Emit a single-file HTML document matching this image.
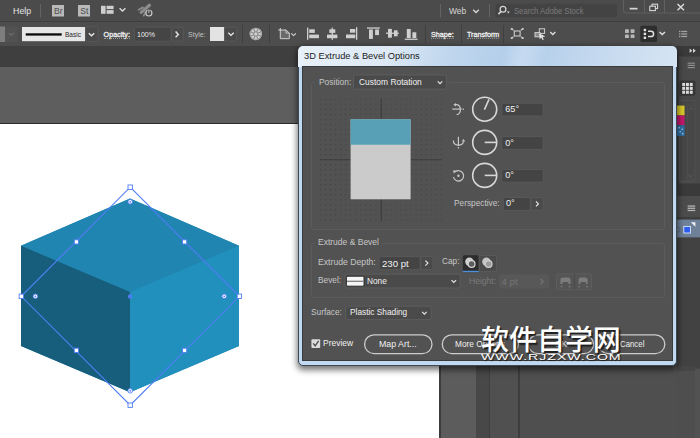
<!DOCTYPE html>
<html lang="en">
<head>
<meta charset="utf-8">
<title>3D Extrude &amp; Bevel Options</title>
<style>
html,body{margin:0;padding:0;}
body{width:700px;height:438px;overflow:hidden;position:relative;background:#5e5e5e;
  font-family:"Liberation Sans","Noto Sans CJK SC",sans-serif;color:#dcdcdc;}
.a{position:absolute;}
.t{position:absolute;white-space:nowrap;line-height:1;transform-origin:0 0;}
#menubar{left:0;top:0;width:700px;height:21px;background:#4b4b4b;}
#ctrlbar{left:0;top:21px;width:700px;height:25px;background:#4d4d4d;border-top:1px solid #3e3e3e;box-sizing:border-box;}
#tabstrip{left:0;top:46px;width:700px;height:21.3px;background:#3f3f3f;}
#paste{left:0;top:67px;width:700px;height:371px;background:#5e5e5e;}
#canvas{left:0;top:123px;width:439px;height:315px;background:#fff;border-top:1.2px solid #2c2c2c;box-sizing:border-box;}
#rpanel{left:677px;top:46px;width:23px;height:392px;background:#4a4a4a;}
/* dialog */
#dlg{left:297.6px;top:45.6px;width:379.6px;height:320.6px;box-sizing:border-box;border-radius:6px 6px 5px 5px;
  background:#c0d8f0;border:1px solid #3d4852;box-shadow:0 2.5px 6px 1px rgba(0,0,0,.55);}
#dlgtitle{left:-0.6px;top:-0.6px;width:379px;height:20.8px;border-radius:5px 5px 0 0;
  background:linear-gradient(105deg,#e8f0f9 0%,#dde9f5 24%,#bfd6ed 40%,#b5cfea 54%,#c6dbf0 59%,#b8d1eb 65%,#c9dcf0 84%,#d6e4f3 100%);}
#dlgbody{left:3.8px;top:19.6px;width:370.4px;height:294.5px;background:#525252;border:1px solid #3b3b3b;box-sizing:border-box;}
.u{border-bottom:1px dotted #9a9a9a;padding-bottom:0.2px;}
.grp{position:absolute;border:1px solid #5f5f5f;box-sizing:border-box;border-radius:2px;}
.fld{position:absolute;background:#454545;border:1px solid #5a5a5a;box-sizing:border-box;border-radius:2px;}
.pill{position:absolute;border:1.3px solid #c8c8c8;box-sizing:border-box;border-radius:10px;}
</style>
</head>
<body>
<div class="a" id="menubar"></div>
<div class="a" id="ctrlbar"></div>
<div class="a" id="tabstrip"></div>
<div class="a" id="paste"></div>
<div class="a" id="canvas"></div>


<!-- TOP BARS ICONS -->
<svg class="a" id="topsvg" style="left:0;top:0" width="700" height="46" viewBox="0 0 700 46">
  <!-- menubar dividers -->
  <g stroke="#636363" stroke-width="1">
    <line x1="40.5" y1="4" x2="40.5" y2="17.5"/>
    <line x1="440.5" y1="4" x2="440.5" y2="17.5"/>
    <line x1="489.5" y1="4" x2="489.5" y2="17.5"/>
  </g>
  <!-- Br / St -->
  <rect x="52" y="5" width="12" height="11.5" fill="#b9b9b9"/>
  <rect x="78" y="5" width="12" height="11.5" fill="#b9b9b9"/>
  <!-- layout icon -->
  <g fill="#cfcfcf">
    <rect x="101" y="5.8" width="4.6" height="8"/>
    <rect x="106.6" y="5.8" width="7" height="3.3"/>
    <rect x="106.6" y="10.1" width="7" height="3.7"/>
  </g>
  <polyline points="119.6,8.3 122.5,11 125.4,8.3" fill="none" stroke="#e0e0e0" stroke-width="1.3"/>
  <!-- gpu rocket -->
  <g stroke="#8c8c8c" stroke-linecap="round" fill="none">
    <line x1="138.6" y1="9.8" x2="143" y2="7.4" stroke-width="1.8"/>
    <line x1="141.2" y1="12.4" x2="149.4" y2="5.2" stroke-width="3.2"/>
    <line x1="143.8" y1="15.6" x2="145.6" y2="12.4" stroke-width="1.8"/>
  </g>
  <circle cx="148.9" cy="13" r="3" fill="#4b4b4b" stroke="#c6c6c6" stroke-width="1.2"/>
  <line x1="148.9" y1="9.3" x2="148.9" y2="12.8" stroke="#4b4b4b" stroke-width="2.6"/>
  <line x1="148.9" y1="9.8" x2="148.9" y2="12.8" stroke="#c6c6c6" stroke-width="1.1"/>
  <!-- Web chevron -->
  <polyline points="473.2,9.8 476,12.5 478.8,9.8" fill="none" stroke="#d8d8d8" stroke-width="1.3"/>
  <!-- search box -->
  <rect x="495.5" y="3.8" width="121.5" height="13.4" rx="2" fill="#434343"/>
  <circle cx="503" cy="9.2" r="2.9" fill="none" stroke="#d4d4d4" stroke-width="1.3"/>
  <line x1="501" y1="11.4" x2="498.4" y2="14.2" stroke="#d4d4d4" stroke-width="1.6"/>
  <polygon points="506.8,11.6 509.8,11.6 508.3,13.4" fill="#d4d4d4"/>
  <!-- window controls -->
  <path d="M623.5,0 V10.5 Q623.5,13 626,13 H700" fill="none" stroke="#606060" stroke-width="1"/>
  <line x1="644.5" y1="0" x2="644.5" y2="13" stroke="#606060"/>
  <line x1="664.5" y1="0" x2="664.5" y2="13" stroke="#606060"/>
  <rect x="629.7" y="7.8" width="7.8" height="1.7" fill="#d6d6d6"/>
  <rect x="652" y="4.2" width="5.6" height="4.4" fill="none" stroke="#d6d6d6" stroke-width="1.1"/>
  <rect x="649.8" y="6.2" width="5.6" height="4.4" fill="#4b4b4b" stroke="#d6d6d6" stroke-width="1.1"/>
  <path d="M677.5,4 L684,10.2 M684,4 L677.5,10.2" stroke="#dcdcdc" stroke-width="1.4" fill="none"/>

  <!-- CONTROL BAR -->
  <rect x="0" y="26.5" width="5" height="15.5" fill="#7e7e7e"/>
  <rect x="5" y="26.5" width="12.5" height="15.5" fill="#525252"/>
  <polyline points="8.8,33 11.3,35.3 13.8,33" fill="none" stroke="#6e6e6e" stroke-width="1.1"/>
  <!-- stroke profile -->
  <rect x="22" y="27" width="63" height="14.2" fill="#e6e6e6"/>
  <rect x="25.7" y="33.3" width="36" height="2.3" fill="#0a0a0a"/>
  <rect x="85.5" y="26.8" width="12.5" height="14.6" rx="1.5" fill="#4a4a4a" stroke="#5c5c5c" stroke-width="0.8"/>
  <polyline points="88.8,33.2 91.5,35.8 94.2,33.2" fill="none" stroke="#e6e6e6" stroke-width="1.4"/>
  <!-- opacity field -->
  <rect x="134.5" y="27.2" width="36.5" height="14" rx="1.5" fill="#454545" stroke="#585858" stroke-width="0.8"/>
  <rect x="171.8" y="27.2" width="11.5" height="14" rx="1.5" fill="#4a4a4a" stroke="#5c5c5c" stroke-width="0.8"/>
  <polyline points="175.6,31.6 178.3,34.4 175.6,37.2" fill="none" stroke="#e6e6e6" stroke-width="1.4"/>
  <!-- style swatch -->
  <rect x="210" y="27" width="14.2" height="14" fill="#e3e3e3"/>
  <rect x="224.6" y="27.2" width="11.8" height="13.8" rx="1.5" fill="#4a4a4a" stroke="#5c5c5c" stroke-width="0.8"/>
  <polyline points="228.3,32.8 231,35.4 233.7,32.8" fill="none" stroke="#e6e6e6" stroke-width="1.4"/>
  <!-- ctrl dividers -->
  <g stroke="#3f3f3f" stroke-width="1">
    <line x1="242.5" y1="25" x2="242.5" y2="43"/>
    <line x1="269.5" y1="25" x2="269.5" y2="43"/>
    <line x1="425.5" y1="25" x2="425.5" y2="43"/>
    <line x1="461.5" y1="25" x2="461.5" y2="43"/>
    <line x1="503.5" y1="25" x2="503.5" y2="43"/>
  </g>
  <!-- recolor wheel -->
  <circle cx="255.8" cy="34" r="6.2" fill="#cdcdcd"/>
  <g stroke="#7d7d7d" stroke-width="0.9"><line x1="257.83" y1="34.84" x2="260.97" y2="36.14"/><line x1="256.64" y1="36.03" x2="257.94" y2="39.17"/><line x1="254.96" y1="36.03" x2="253.66" y2="39.17"/><line x1="253.77" y1="34.84" x2="250.63" y2="36.14"/><line x1="253.77" y1="33.16" x2="250.63" y2="31.86"/><line x1="254.96" y1="31.97" x2="253.66" y2="28.83"/><line x1="256.64" y1="31.97" x2="257.94" y2="28.83"/><line x1="257.83" y1="33.16" x2="260.97" y2="31.86"/></g>
  <circle cx="255.8" cy="34" r="2.2" fill="#cdcdcd" stroke="#7d7d7d" stroke-width="0.9"/>
  <circle cx="255.8" cy="34" r="5.6" fill="none" stroke="#8a8a8a" stroke-width="0.6"/>
  <!-- doc setup icon -->
  <path d="M280.3,30 H286 L289.3,33 V38.7 H280.3 Z" fill="#6a6a6a" stroke="#d0d0d0" stroke-width="1"/>
  <path d="M286,30 V33 H289.3" fill="none" stroke="#d0d0d0" stroke-width="0.9"/>
  <path d="M278.3,30 H281 M280.3,28 V30.6" stroke="#d0d0d0" stroke-width="1" fill="none"/>
  <polyline points="291.3,33.4 293.6,35.6 295.9,33.4" fill="none" stroke="#d8d8d8" stroke-width="1.1"/>
  <!-- align icons -->
  <g fill="#cfcfcf">
    <rect x="307" y="27.6" width="1.3" height="12.2"/>
    <rect x="309.2" y="29.3" width="5.6" height="3.6"/>
    <rect x="309.2" y="34.6" width="9.8" height="3.6"/>
    <rect x="331.6" y="27.6" width="1.3" height="12.2"/>
    <rect x="329.3" y="29.3" width="6" height="3.6"/>
    <rect x="327" y="34.6" width="10.4" height="3.6"/>
    <rect x="356" y="27.2" width="1.3" height="12.6"/>
    <rect x="350" y="29" width="5.3" height="3.7"/>
    <rect x="346" y="34.5" width="9.3" height="3.7"/>
    <rect x="367" y="27.4" width="12.8" height="1.3"/>
    <rect x="369" y="29.5" width="3.9" height="9.4"/>
    <rect x="375.1" y="29.5" width="3.9" height="5.6"/>
    <rect x="386" y="32.6" width="12.7" height="1.3"/>
    <rect x="388" y="28.9" width="3.9" height="8.8"/>
    <rect x="394" y="30.3" width="3.6" height="6"/>
    <rect x="404.8" y="38.6" width="12.8" height="1.3"/>
    <rect x="406.8" y="29" width="3.9" height="9"/>
    <rect x="412.4" y="32.3" width="3.9" height="5.7"/>
  </g>
  <!-- isolate icon -->
  <g stroke="#cfcfcf" stroke-width="1.1" fill="none">
    <rect x="514.3" y="31" width="5.8" height="5"/>
    <path d="M511.5,28.6 L513.6,30.4 M522.8,28.6 L520.8,30.4 M511.5,38.4 L513.6,36.6 M522.8,38.4 L520.8,36.6"/>
  </g>
  <g fill="#cfcfcf"><rect x="510.8" y="28" width="1.8" height="1.8"/><rect x="521.8" y="28" width="1.8" height="1.8"/><rect x="510.8" y="37.2" width="1.8" height="1.8"/><rect x="521.8" y="37.2" width="1.8" height="1.8"/></g>
  <!-- select similar -->
  <g stroke="#cfcfcf" stroke-width="1" fill="none">
    <rect x="539.3" y="28.8" width="5.3" height="4.6"/>
    <rect x="535" y="32.6" width="5" height="4.2" fill="#8a8a8a"/>
  </g>
  <polygon points="539.4,33.4 545.4,36.6 542.6,37 543.8,39.6 542.5,40 541.4,37.6 539.6,39.2" fill="#e4e4e4"/>
  <polyline points="550.2,32 552.8,34.5 555.4,32" fill="none" stroke="#e0e0e0" stroke-width="1.3"/>
  <!-- grid dots icon -->
  <g fill="#b6b6b6">
    <rect x="625" y="29.2" width="3.9" height="3.7" rx="0.6"/><rect x="630.6" y="29.2" width="3.9" height="3.7" rx="0.6"/>
    <rect x="625" y="34.4" width="3.9" height="3.7" rx="0.6"/><rect x="630.6" y="34.4" width="3.9" height="3.7" rx="0.6"/>
  </g>
  <!-- snap button -->
  <rect x="640.3" y="25.7" width="16.8" height="16.4" rx="2" fill="#2e2e2e"/>
  <g fill="#e0e0e0">
    <rect x="643.7" y="28.8" width="2.4" height="2.4"/><rect x="643.7" y="32.7" width="2.4" height="2.4"/><rect x="643.7" y="36.6" width="2.4" height="2.4"/>
  </g>
  <path d="M648,31.3 H651 A2.6,2.6 0 0 1 651,36.5 H648" fill="none" stroke="#e0e0e0" stroke-width="1.5"/>
  <polyline points="659.6,32 662.3,34.6 665,32" fill="none" stroke="#e0e0e0" stroke-width="1.4"/>
  <!-- list icon -->
  <g fill="#a2a2a2">
    <rect x="679" y="30.8" width="1.4" height="1.3"/><rect x="681.3" y="30.8" width="5.9" height="1.3"/>
    <rect x="679" y="33.3" width="1.4" height="1.3"/><rect x="681.3" y="33.3" width="5.9" height="1.3"/>
    <rect x="679" y="35.8" width="1.4" height="1.3"/><rect x="681.3" y="35.8" width="5.9" height="1.3"/>
  </g>
</svg>
<!-- TOP BAR TEXT -->
<span class="t" id="tHelp" style="transform:scaleX(0.924);left:12.6px;top:5.9px;font-size:9.6px;color:#e4e4e4">Help</span>
<span class="t" id="tBr" style="left:54px;top:7px;font-size:8.6px;color:#4d4d4d">Br</span>
<span class="t" id="tSt" style="left:80.2px;top:7px;font-size:8.6px;color:#4d4d4d">St</span>
<span class="t" id="tWeb" style="transform:scaleX(0.895);left:448.8px;top:5.7px;font-size:9.4px;color:#d8d8d8">Web</span>
<span class="t" id="tSearch" style="transform:scaleX(0.893);left:513.5px;top:6.6px;font-size:8.6px;color:#7c7c7c">Search Adobe Stock</span>
<span class="t" id="tBasic" style="transform:scaleX(0.95);left:65px;top:31.8px;font-size:6.9px;color:#262626">Basic</span>
<span class="t u" id="tOpacity" style="transform:scaleX(1);left:103.6px;top:31px;font-size:7.2px;color:#f0f0f0;-webkit-text-stroke:0.3px #f0f0f0">Opacity:</span>
<span class="t" id="t100" style="transform:scaleX(0.98);left:137.2px;top:30.6px;font-size:7.2px;color:#ececec">100%</span>
<span class="t" id="tStyle" style="transform:scaleX(0.98);left:188px;top:31px;font-size:7.2px;color:#c2c2c2">Style:</span>
<span class="t u" id="tShape" style="transform:scaleX(0.993);left:430.6px;top:31px;font-size:7.2px;color:#f0f0f0;-webkit-text-stroke:0.3px #f0f0f0">Shape:</span>
<span class="t u" id="tTransform" style="transform:scaleX(0.992);left:466.8px;top:31px;font-size:7.2px;color:#f0f0f0;-webkit-text-stroke:0.3px #f0f0f0">Transform</span>


<!-- BOTTOM RIGHT PANELS (behind dialog) -->
<div class="a" style="left:439px;top:123px;width:1.5px;height:315px;background:#3c3c3c"></div>
<div class="a" style="left:440.5px;top:67px;width:36px;height:371px;background:#5c5c5c"></div>
<div class="a" style="left:476px;top:67px;width:12.5px;height:371px;background:#484848"></div>
<div class="a" style="left:488.5px;top:67px;width:1.2px;height:371px;background:#3e3e3e"></div>
<div class="a" style="left:489.7px;top:67px;width:28px;height:371px;background:#505050"></div>
<div class="a" style="left:517.6px;top:67px;width:2px;height:371px;background:#3d3d3d"></div>
<div class="a" style="left:519.6px;top:67px;width:181px;height:371px;background:#4f4f4f"></div>
<!-- RIGHT DOCK -->
<svg class="a" id="rsvg" style="left:677px;top:46px" width="23" height="392" viewBox="677 46 23 392">
  <rect x="677" y="46" width="23" height="392" fill="#494949"/>
  <rect x="677" y="46" width="1.6" height="320" fill="#393939"/>
  <rect x="677" y="46" width="23" height="10.5" fill="#3a3a3a"/>
  <polygon points="689.6,48.6 692.4,50.8 689.6,53" fill="#cfcfcf"/>
  <polygon points="693,48.6 695.8,50.8 693,53" fill="#cfcfcf"/>
  <g fill="#8c8c8c"><rect x="687.6" y="62.6" width="7.4" height="1.2"/><rect x="687.6" y="64.8" width="7.4" height="1.2"/><rect x="687.6" y="67" width="7.4" height="1.2"/></g>
  <rect x="679.4" y="80.4" width="16" height="15.4" rx="2" fill="#363636"/>
  <g fill="#dcdcdc"><rect x="682.2" y="82.9" width="2.9" height="3.1"/><rect x="686.0" y="82.9" width="2.9" height="3.1"/><rect x="689.8" y="82.9" width="2.9" height="3.1"/><rect x="682.2" y="86.8" width="2.9" height="3.1"/><rect x="686.0" y="86.8" width="2.9" height="3.1"/><rect x="689.8" y="86.8" width="2.9" height="3.1"/><rect x="682.2" y="90.7" width="2.9" height="3.1"/><rect x="686.0" y="90.7" width="2.9" height="3.1"/><rect x="689.8" y="90.7" width="2.9" height="3.1"/></g>
  <rect x="679.5" y="100.5" width="15.5" height="81" fill="#474747" stroke="#4f4f4f"/>
  <rect x="687.5" y="105.5" width="7.5" height="74" fill="none" stroke="#4f4f4f" stroke-width="0.8"/>
  <polyline points="689.2,109.6 691.2,107.8 693.2,109.6" fill="none" stroke="#5a5a5a" stroke-width="1"/>
  <rect x="677" y="105.6" width="7.5" height="9.8" fill="#d9c92a"/>
  <rect x="677" y="115.4" width="7.5" height="9.8" fill="#c4186c"/>
  <rect x="677" y="125.2" width="7.5" height="10.8" fill="#2f6fa3"/>
  <g fill="#9fc3e0"><rect x="678.6" y="127" width="1.4" height="1.4"/><rect x="681.6" y="128.6" width="1.4" height="1.4"/><rect x="679.4" y="131" width="1.4" height="1.4"/><rect x="682" y="133" width="1.4" height="1.4"/></g>
  <polyline points="688.4,175 690.6,177 692.8,175" fill="none" stroke="#5e5e5e" stroke-width="1"/>
  <rect x="677" y="183.6" width="23" height="12.4" fill="#3a3a3a"/>
  <rect x="677" y="196" width="23" height="21" fill="#4c4c4c"/>
  <g fill="#b4b4b4"><rect x="687.6" y="205.4" width="7.6" height="1.3"/><rect x="687.6" y="207.6" width="7.6" height="1.3"/><rect x="687.6" y="209.8" width="7.6" height="1.3"/></g>
  <rect x="677" y="217" width="23" height="2.6" fill="#3e3e3e"/>
  <rect x="677" y="219.6" width="23" height="18" fill="#6f8198"/>
  <circle cx="677.6" cy="229.6" r="2.4" fill="none" stroke="#5b6b80" stroke-width="1"/>
  <rect x="683.8" y="226.4" width="6.6" height="6.6" fill="#2a5cf0" stroke="#dfe8ff" stroke-width="0.9"/>
  <polygon points="690.8,222.2 695.4,222.2 695.4,226.8" fill="#f2f2f2"/>
  <rect x="677" y="237.6" width="23" height="131" fill="#424242"/>
  <rect x="677" y="368.6" width="18" height="70" fill="#4e4e4e"/>
  <rect x="694.8" y="368.6" width="5.2" height="70" fill="#525252"/>
  <rect x="677" y="366" width="18" height="5" fill="#464646"/>
</svg>

<!-- CUBE -->
<svg class="a" id="cube" style="left:0;top:122px" width="300" height="316" viewBox="0 122 300 316">
  <polygon points="130,198.5 239,245.8 239,345.9 130,392.2 21,345.9 21,245.8" fill="#2088b4"/>
  <polygon points="130,198.5 239,245.8 130,292 21,245.8" fill="#2085b0"/>
  <polygon points="21,245.8 130,292 130,392.2 21,345.9" fill="#175e7c"/>
  <polygon points="130,292 239,245.8 239,345.9 130,392.2" fill="#2290bd"/>
  <g fill="none" stroke="#4f7df5" stroke-width="1.15">
    <polygon points="130.2,187.2 239.4,296.3 130.2,405.2 21.3,296.3"/>
  </g>
  <g fill="#fff" stroke="#4f7df5" stroke-width="0.9">
    <rect x="128" y="185" width="4.4" height="4.4"/>
    <rect x="237.2" y="294.1" width="4.4" height="4.4"/>
    <rect x="128" y="403" width="4.4" height="4.4"/>
    <rect x="19.1" y="294.1" width="4.4" height="4.4"/>
    <rect x="74.3" y="239.8" width="4.2" height="4.2"/>
    <rect x="182.5" y="239.8" width="4.2" height="4.2"/>
    <rect x="74.3" y="348.2" width="4.2" height="4.2"/>
    <rect x="182.5" y="348.2" width="4.2" height="4.2"/>
  </g>
  <g fill="#fff" stroke="#4f7df5" stroke-width="0.9">
    <circle cx="130.2" cy="201.8" r="2.3"/><circle cx="130.2" cy="390.8" r="2.3"/>
    <circle cx="35.4" cy="296.3" r="2.3"/><circle cx="224.2" cy="296.3" r="2.3"/>
  </g>
  <g fill="#4f7df5">
    <circle cx="130.2" cy="201.8" r="0.9"/><circle cx="130.2" cy="390.8" r="0.9"/>
    <circle cx="35.4" cy="296.3" r="0.9"/><circle cx="224.2" cy="296.3" r="0.9"/>
    <circle cx="130.1" cy="296.4" r="2.2"/>
  </g>
</svg>

<!-- DIALOG -->
<div class="a" id="dlg">
  <div class="a" id="dlgtitle"></div>
  <div class="a" id="dlgbody"></div>
</div>

<!-- DIALOG CONTENT (page coords) -->
<svg class="a" id="dlgsvg" style="left:298px;top:66px" width="379" height="300" viewBox="298 66 379 300">
  <defs>
    <pattern id="dots" x="320" y="98.7" width="5.03" height="5.03" patternUnits="userSpaceOnUse">
      <rect x="0" y="0" width="1.1" height="1.1" fill="#424242"/>
    </pattern>
  </defs>
  <!-- group boxes -->
  <rect x="311.5" y="82.5" width="353" height="147" rx="2" fill="none" stroke="#5b5b5b"/>
  <rect x="311.5" y="243.5" width="353" height="54" rx="2" fill="none" stroke="#5b5b5b"/>
  <rect x="315" y="76" width="134" height="14" fill="#525252"/>
  <rect x="315" y="237" width="67" height="13" fill="#525252"/>
  <!-- position dropdown -->
  <rect x="353.5" y="75" width="93" height="14.2" rx="2" fill="#4a4a4a" stroke="#5e5e5e" stroke-width="0.9"/>
  <polyline points="437.7,81.3 440,83.6 442.3,81.3" fill="none" stroke="#e6e6e6" stroke-width="1.2"/>
  <!-- track cube area -->
  <rect x="320" y="98.5" width="122" height="122.5" fill="url(#dots)"/>
  <line x1="381.3" y1="98.5" x2="381.3" y2="220.5" stroke="#3c3c3c" stroke-width="1.1"/>
  <line x1="320" y1="159.8" x2="442" y2="159.8" stroke="#3c3c3c" stroke-width="1.1"/>
  <rect x="350.6" y="119.3" width="60" height="80" fill="#cbcbcb"/>
  <rect x="350.6" y="119.3" width="60" height="25.4" fill="#58a0b6"/>
  <!-- rotate icons -->
  <g fill="none" stroke="#c8c8c8" stroke-width="1.2">
    <line x1="452.2" y1="109.1" x2="461.6" y2="109.1"/>
    <line x1="462.6" y1="109.1" x2="464" y2="109.1"/>
    <path d="M455.8,104.6 C461.8,104.4 461.8,114.6 456.6,114.6"/>
    <line x1="458.4" y1="136.8" x2="458.4" y2="146"/>
    <line x1="458.4" y1="147" x2="458.4" y2="148.4"/>
    <path d="M453.4,140.4 C453.2,146.4 463.6,146.4 463.4,141.6"/>
    <path d="M455,172 A5.2,5.2 0 1 1 453.4,177.2"/>
  </g>
  <g fill="#c8c8c8">
    <polygon points="453.4,104.7 456,103 456,106.4"/>
    <polygon points="463.5,138.9 461.8,141.6 465.2,141.6"/>
    <polygon points="453,170.2 456.4,170.8 453.8,173.4"/>
    <circle cx="458.4" cy="175.8" r="1.2"/>
  </g>
  <!-- dials -->
  <g fill="none" stroke="#d8d8d8" stroke-width="1.6">
    <circle cx="484.7" cy="109.2" r="12"/>
    <circle cx="484.7" cy="142.4" r="12"/>
    <circle cx="484.7" cy="175.4" r="12"/>
    <line x1="484.4" y1="109.6" x2="489" y2="99.4"/>
    <line x1="484.7" y1="142.4" x2="496.5" y2="142.4"/>
    <line x1="484.7" y1="175.4" x2="496.5" y2="175.4"/>
  </g>
  <!-- angle fields -->
  <g fill="#444" stroke="#5a5a5a" stroke-width="0.9">
    <rect x="501.8" y="103.2" width="41.4" height="12.8" rx="1.5"/>
    <rect x="501.8" y="136.6" width="41.4" height="12.8" rx="1.5"/>
    <rect x="501.8" y="169.4" width="41.4" height="12.8" rx="1.5"/>
    <rect x="503.3" y="197.5" width="27" height="12.8" rx="1.5"/>
  </g>
  <rect x="531" y="197.5" width="12.2" height="12.8" rx="1.5" fill="#4a4a4a" stroke="#5c5c5c" stroke-width="0.8"/>
  <polyline points="536,201.4 538.4,203.9 536,206.4" fill="none" stroke="#e6e6e6" stroke-width="1.2"/>
  <!-- extrude depth -->
  <rect x="379.2" y="256.6" width="41" height="13" rx="1.5" fill="#444" stroke="#5a5a5a" stroke-width="0.9"/>
  <rect x="420.8" y="256.6" width="12.2" height="13" rx="1.5" fill="#4a4a4a" stroke="#5c5c5c" stroke-width="0.8"/>
  <polyline points="425.4,260.6 427.9,263.1 425.4,265.6" fill="none" stroke="#e6e6e6" stroke-width="1.2"/>
  <!-- cap buttons -->
  <rect x="462.8" y="255.2" width="16" height="16" rx="1.5" fill="#2d2d2d"/>
  <rect x="462.8" y="270.8" width="16" height="1.3" fill="#4b8fdc"/>
  <rect x="479.2" y="255.4" width="17.4" height="16" rx="1.5" fill="#4a4a4a" stroke="#5e5e5e" stroke-width="0.8"/>
  <circle cx="469.4" cy="261.8" r="4.2" fill="#cfcfcf"/>
  <circle cx="471.6" cy="264" r="3.4" fill="#5c5c5c" stroke="#d6d6d6" stroke-width="1.2"/>
  <circle cx="486.4" cy="261.8" r="4.2" fill="#c4c4c4"/>
  <circle cx="488.6" cy="264" r="3.4" fill="#9c9c9c" stroke="#d0d0d0" stroke-width="1.2"/>
  <!-- bevel dropdown -->
  <rect x="345" y="274.2" width="115.2" height="13.8" rx="2" fill="#4a4a4a" stroke="#5e5e5e" stroke-width="0.9"/>
  <rect x="346.4" y="276.2" width="17.6" height="10" rx="1.5" fill="#f6f6f6" stroke="#2c2c2c" stroke-width="1"/>
  <rect x="347" y="280.7" width="16.4" height="1.1" fill="#6a6a6a"/>
  <polyline points="451.5,280.2 453.8,282.5 456.1,280.2" fill="none" stroke="#e6e6e6" stroke-width="1.2"/>
  <!-- height disabled -->
  <rect x="498.7" y="274.6" width="50.3" height="14" rx="1.5" fill="#585858"/>
  <polyline points="540.5,278.8 543,281.6 540.5,284.4" fill="none" stroke="#777" stroke-width="1.1"/>
  <rect x="556.5" y="273.8" width="35" height="16" rx="1.5" fill="#555" stroke="#5f5f5f" stroke-width="0.9"/>
  <line x1="574.5" y1="273.8" x2="574.5" y2="289.8" stroke="#4a4a4a"/>
  <g fill="#7c7c7c">
    <path d="M560.4,284 V280 Q560.4,277.4 563,277.4 H568 Q570.6,277.4 570.6,280 V284 H568.4 V282 H562.6 V284 Z"/>
    <path d="M578.6,284 V280 Q578.6,277.4 581.2,277.4 H585 Q587.6,277.4 587.6,280 V284 H585.8 V282 H580.4 V284 Z"/>
    <polygon points="560.2,286.6 562.2,285.4 562.2,287.8"/><polygon points="570.8,286.6 568.8,285.4 568.8,287.8"/>
    <polygon points="580.4,286.6 578.6,285.4 578.6,287.8"/><polygon points="585.8,286.6 587.6,285.4 587.6,287.8"/>
  </g>
  <!-- surface dropdown -->
  <rect x="345.7" y="306.2" width="85.6" height="13.4" rx="2" fill="#4a4a4a" stroke="#5e5e5e" stroke-width="0.9"/>
  <polyline points="422.1,311.9 424.4,314.2 426.7,311.9" fill="none" stroke="#e6e6e6" stroke-width="1.2"/>
  <!-- checkbox -->
  <rect x="311.4" y="339.2" width="8.8" height="8.8" rx="1" fill="#dcdcdc"/>
  <polyline points="313.2,343.4 315.2,345.8 318.6,340.9" fill="none" stroke="#505050" stroke-width="1.35"/>
  <!-- pill buttons -->
  <g fill="none" stroke="#cdcdcd" stroke-width="1.3">
    <rect x="364.6" y="334.8" width="67.4" height="18.8" rx="9.4"/>
    <rect x="442.3" y="334.8" width="76" height="18.8" rx="9.4"/>
    <rect x="528.5" y="334.8" width="65" height="18.8" rx="9.4"/>
    <rect x="598.8" y="334.8" width="66" height="18.8" rx="9.4"/>
  </g>
</svg>
<span class="t" id="dTitle" style="transform:scaleX(1.012);left:304.2px;top:52.1px;font-size:9.2px;color:#1c1c1c">3D Extrude &amp; Bevel Options</span>
<span class="t" id="dPosition" style="left:318.6px;top:77.7px;font-size:9px;transform:scaleX(0.936);color:#c6c6c6">Position:</span>
<span class="t b" id="dCustom" style="left:358.6px;top:77.7px;font-size:9px;transform:scaleX(0.937);color:#f0f0f0">Custom Rotation</span>
<span class="t b" id="d65" style="left:505.3px;top:105.1px;font-size:9.1px;color:#f0f0f0">65°</span>
<span class="t b" id="d0a" style="left:505.3px;top:138.5px;font-size:9.1px;color:#f0f0f0">0°</span>
<span class="t b" id="d0b" style="left:505.3px;top:171.3px;font-size:9.1px;color:#f0f0f0">0°</span>
<span class="t" id="dPersp" style="left:454.4px;top:199.3px;font-size:9px;transform:scaleX(0.922);color:#c6c6c6">Perspective:</span>
<span class="t b" id="d0c" style="left:506px;top:199.3px;font-size:9.1px;color:#f0f0f0">0°</span>
<span class="t" id="dEB" style="left:318.3px;top:238.3px;font-size:9px;transform:scaleX(0.945);color:#c6c6c6">Extrude &amp; Bevel</span>
<span class="t" id="dED" style="left:318.3px;top:258.3px;font-size:9px;transform:scaleX(0.962);color:#c6c6c6">Extrude Depth:</span>
<span class="t b" id="d230" style="left:382px;top:258.7px;font-size:9.6px;color:#f0f0f0">230 pt</span>
<span class="t" id="dCap" style="left:441.7px;top:257.3px;font-size:9px;transform:scaleX(0.922);color:#c6c6c6">Cap:</span>
<span class="t" id="dBevel" style="left:318.3px;top:276.3px;font-size:9px;transform:scaleX(0.922);color:#c6c6c6">Bevel:</span>
<span class="t b" id="dNone" style="left:366.6px;top:276.5px;font-size:9px;transform:scaleX(0.922);color:#f0f0f0">None</span>
<span class="t" id="dHeight" style="left:469px;top:276.5px;font-size:9px;transform:scaleX(0.95);color:#7a7a7a">Height:</span>
<span class="t" id="d4pt" style="left:501.6px;top:277px;font-size:9.6px;color:#767676">4 pt</span>
<span class="t" id="dSurface" style="left:310.8px;top:308.1px;font-size:9px;transform:scaleX(0.922);color:#c6c6c6">Surface:</span>
<span class="t b" id="dPlastic" style="left:349.6px;top:308.1px;font-size:9px;transform:scaleX(0.922);color:#f0f0f0">Plastic Shading</span>
<span class="t b" id="dPreview" style="left:323.4px;top:339.3px;font-size:9px;transform:scaleX(0.94);color:#f0f0f0">Preview</span>
<span class="t b" id="dMap" style="left:379px;top:339.5px;font-size:9px;transform:scaleX(0.979);color:#f0f0f0">Map Art...</span>
<span class="t b" id="dMore" style="left:454.6px;top:339.5px;font-size:9px;transform:scaleX(0.922);color:#f0f0f0">More Options</span>
<span class="t b" id="dOK" style="left:555px;top:339.5px;font-size:9px;transform:scaleX(0.922);color:#f0f0f0">OK</span>
<span class="t b" id="dCancel" style="left:620px;top:339.5px;font-size:9px;transform:scaleX(0.87);color:#f0f0f0">Cancel</span>


<!-- WATERMARK -->
<span class="t" id="wmCN" style="left:481px;top:325.6px;font-size:28.4px;font-weight:500;transform:scaleX(0.985);color:#fff;font-family:'Liberation Sans','Noto Sans CJK SC',sans-serif;text-shadow:1.6px 1.6px 1.2px rgba(20,20,20,.85)">软件自学网</span>
<span class="t" id="wmEN" style="left:480.6px;top:352.6px;font-size:9px;color:#fff;letter-spacing:0.6px;transform:scaleX(1.575);text-shadow:0.6px 1px 0.8px rgba(20,20,20,.85)">WWW.RJZXW.COM</span>

</body>
</html>
